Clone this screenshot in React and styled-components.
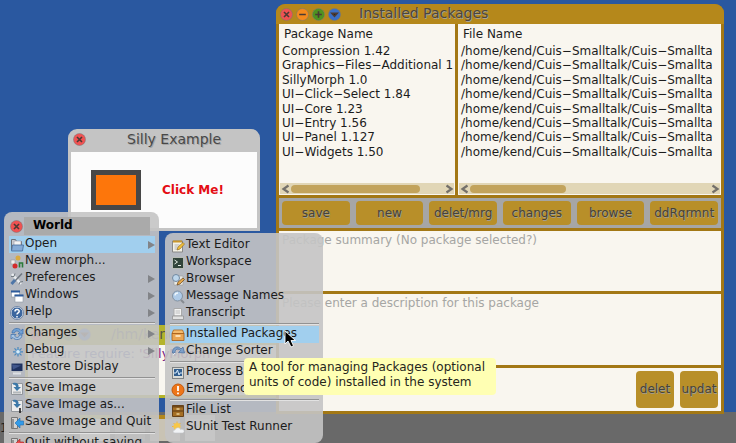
import React from "react";
import styled, { createGlobalStyle, css } from "styled-components";

const GlobalStyle = createGlobalStyle`
  *, *::before, *::after { box-sizing: border-box; }
  html, body { margin: 0; height: 100%; }
  body, button, textarea { font-family: "DejaVu Sans", sans-serif; font-size: 12px; }
  button { border: 0; padding: 0; background: none; color: inherit; cursor: default; }
  h1, h2, p, ul { margin: 0; padding: 0; font-weight: normal; list-style: none; }
`;

const Desktop = styled.main`
  position: relative;
  display: flex;
  flex-direction: column;
  justify-content: flex-end;
  min-height: 443px;
  height: 100vh;
  overflow: hidden;
  background: #2a58a0;
  color: #1c1c1c;
`;

const Taskbar = styled.footer`
  display: flex;
  align-items: center;
  gap: 5px;
  height: 31px;
  background: #696969;
  color: #1c1c1c;
`;

const TaskPreview = styled.div`
  width: 30px;
  height: 26px;
  border-top: 4px solid ${(p) => p.$bar};
  background: ${(p) => p.$fill};
`;

const TaskCount = styled.span`
  width: 75px;
`;

const Window = styled.section`
  position: absolute;
  display: flex;
  flex-direction: column;
  overflow: hidden;
  border-radius: 9px 9px 0 0;
`;

const FeatureWindow = styled(Window)`
  left: 25px;
  top: 325px;
  width: 254px;
  height: 73px;
  padding: 0 3px 3px;
  background: #b4b42c;
  border-radius: 0;
`;

const FeatureTitle = styled.header`
  display: flex;
  align-items: center;
  gap: 3px;
  height: 20px;
  padding: 0 0 2px 2px;
`;

const FeatureName = styled.h2`
  padding-left: 17px;
  font-size: 14px;
  line-height: 18px;
  color: #55554a;
`;

const FeatureCode = styled.p`
  flex: 1;
  padding: 0 3px;
  background: #f9f7f0;
  color: #5a68c0;
  font-size: 13px;
  line-height: 18px;
  white-space: nowrap;
`;

const CodeString = styled.span`
  color: #7a2080;
`;

const PackagesWindow = styled(Window)`
  left: 276px;
  right: 12px;
  top: 4px;
  height: 410px;
  background: #a37815;
  padding: 0 3px 3px;
`;

const TitleBar = styled.header`
  display: flex;
  align-items: center;
  gap: 3px;
  height: 20px;
  margin: 0 -3px;
  padding-left: 4px;
  background: #b5881b;
`;

const TitleText = styled.h1`
  padding: 0 0 2px 15px;
  font-size: 14px;
  line-height: 18px;
  color: #4a463e;
  text-shadow: 1px 1px 0 #a5a195;
  white-space: nowrap;
`;

const RoundButton = styled.button`
  display: flex;
  width: 13px;
  height: 13px;
  flex: none;
  svg { width: 13px; height: 13px; }
`;

const Panes = styled.div`
  display: grid;
  grid-template-columns: 176px minmax(0, 1fr);
  gap: 3px;
  height: 171px;
`;

const Pane = styled.section`
  display: flex;
  flex-direction: column;
  overflow: hidden;
  min-width: 0;
  padding: 1px;
  background: #f9f6ef;
`;

const PaneHeader = styled.h2`
  padding-left: 4px;
  font-size: 12px;
  line-height: 18px;
`;

const List = styled.ul`
  display: grid;
  grid-auto-rows: 1fr;
  height: 116px;
  padding: 1px 0 0 2px;
  overflow: hidden;
  line-height: 14px;
`;

const ListItem = styled.li`
  white-space: nowrap;
`;

const ScrollTrack = styled.div`
  display: flex;
  align-items: center;
  justify-content: space-between;
  height: 11px;
  margin-top: auto;
  background: #e1d6b6;
`;

const ScrollArrow = styled.button`
  display: flex;
  width: 11px;
  height: 11px;
  flex: none;
  svg { width: 11px; height: 11px; }
`;

const ScrollRail = styled.div`
  flex: 1;
`;

const ScrollThumb = styled.div`
  width: ${(p) => p.$size};
  height: 8px;
  border-radius: 4px;
  background: #c2a35c;
`;

const Toolbar = styled.div`
  display: grid;
  grid-template-columns: repeat(6, minmax(0, 1fr));
  gap: 6px;
  height: 30px;
  margin: 3px 0;
  padding: 3px;
  background: #a6a6a6;
`;

const GoldButton = styled.button`
  overflow: hidden;
  border-radius: 4px;
  padding-bottom: 1px;
  background: #b88f29;
  color: #45433a;
  text-shadow: 1px 1px 0 #a39d8c;
  white-space: nowrap;
`;

const Note = styled.textarea`
  display: block;
  width: 100%;
  height: ${(p) => p.$height};
  margin: 0 0 3px;
  padding: 1px 3px;
  border: 0;
  outline: 0;
  resize: none;
  background: #f9f6ef;
  line-height: 16px;
  &::placeholder { color: #a6a6a4; opacity: 1; }
`;

const ActionBar = styled.div`
  display: flex;
  flex: 1;
  justify-content: flex-end;
  gap: 6px;
  padding: 3px;
  background: #f9f6ef;
`;

const SquareButton = styled(GoldButton)`
  width: 38px;
`;

const SillyWindow = styled(Window)`
  left: 68px;
  top: 129px;
  width: 192px;
  height: 102px;
  padding: 0 3px 3px;
  background: #c4c4c4;
`;

const SillyTitle = styled.header`
  display: flex;
  align-items: center;
  height: 23px;
  padding: 0 2px 3px;
`;

const SillyName = styled.h1`
  padding-left: 41px;
  font-size: 14px;
  line-height: 18px;
  color: #484848;
  text-shadow: 1px 1px 0 #a4a4a4;
`;

const SillyBody = styled.div`
  display: flex;
  align-items: center;
  flex: 1;
  gap: 21px;
  padding-left: 20px;
  background: #fcfcfc;
`;

const Swatch = styled.div`
  width: 50px;
  height: 40px;
  border: 5px solid #474747;
  background: #fd760b;
`;

const ClickMe = styled.button`
  color: #e40d14;
  font-weight: bold;
`;

const Menu = styled.div`
  position: absolute;
  display: flex;
  flex-direction: column;
  border-radius: 8px;
  background: rgba(196, 196, 196, 0.9);
`;

const WorldMenu = styled(Menu)`
  left: 4px;
  top: 212px;
  width: 155px;
  padding: 5px 4px 5px 5px;
`;

const SubMenu = styled(Menu)`
  left: 165px;
  top: 233px;
  width: 158px;
  padding: 4px 4px 7px 5px;
`;

const MenuTitle = styled.header`
  display: flex;
  align-items: center;
  gap: 1px;
  height: 19px;
  padding: 0 5px 1px 1px;
`;

const MenuName = styled.h1`
  flex: 1;
  padding: 0 0 2px 9px;
  background: #aaaaaa;
  color: #000;
  font-size: 12px;
  font-weight: bold;
  line-height: 16px;
`;

const MenuItem = styled.button`
  display: flex;
  align-items: center;
  gap: 1px;
  height: 17px;
  padding-left: 1px;
  text-align: left;
  line-height: 15px;
  white-space: nowrap;
  ${(p) => p.$active && css`background: #a1cfee;`}
  > svg { width: 14px; height: 14px; flex: none; }
  > span { flex: 1; min-width: 0; padding-bottom: 2px; }
`;

const Arrow = styled.i`
  width: 0;
  border: 4px solid transparent;
  border-left: 7px solid #828488;
  border-right: 0;
`;

const Separator = styled.hr`
  width: 100%;
  height: 2px;
  margin: 1px 0;
  border: 0;
  border-top: 1px solid #929292;
  background: #e2e2e2;
`;

const Tooltip = styled.div`
  position: absolute;
  left: 244px;
  top: 358px;
  padding: 2px 11px 5px 5px;
  border-radius: 4px;
  background: #ffffb3;
  color: #26261c;
  line-height: 15px;
  white-space: nowrap;
`;

const Pointer = styled.svg`
  position: absolute;
  left: 284px;
  top: 330px;
  width: 12px;
  height: 18px;
`;

const marks = {
  close: ["#f05252", <path key="m" d="M4 4l5 5M9 4l-5 5" />],
  shrink: ["#f58a1c", <path key="m" d="M3.2 6.5h6.6" />],
  grow: ["#4f9320", <path key="m" d="M3.2 6.5h6.6M6.5 3.2v6.6" />],
  menu: ["#3a6fc6", <path key="m" d="M3.8 5.3h5.4l-2.7 3z" fill="#222" />],
};

function Control({ kind, label }) {
  const [fill, mark] = marks[kind];
  return (
    <RoundButton aria-label={label}>
      <svg viewBox="0 0 13 13" fill="none" stroke="#4a3a34" strokeWidth="1.6">
        <circle cx="6.5" cy="6.5" r="6" fill={fill} stroke="#777" strokeOpacity=".5" strokeWidth="1" />
        {mark}
      </svg>
    </RoundButton>
  );
}

const WindowControls = ({ name }) => (
  <>
    <Control kind="close" label={`Close ${name}`} />
    <Control kind="shrink" label={`Collapse ${name}`} />
    <Control kind="grow" label={`Expand ${name}`} />
    <Control kind="menu" label={`${name} menu`} />
  </>
);

const icons = {
  open: <><path d="M1.5 12V1.500h4l1 2h5V7" fill="#c9cbd0" stroke="#6b7178" /><path d="M4 3h7v5H4z" fill="#f4f4f4" stroke="#99a" strokeWidth=".6" /><path d="M2.500 7h11l-1 6h-11z" fill="#86abd6" stroke="#41699c" strokeWidth=".8" /></>,
  morph: <><circle cx="8" cy="3" r="2.500" fill="#d8aa42" /><rect x="1" y="5" width="4" height="4" fill="#eee" stroke="#999" strokeWidth=".6" /><circle cx="5" cy="11" r="2.500" fill="#d42a2a" /><path d="M9.500 12.500V8h3v4.500" fill="none" stroke="#2b7a39" strokeWidth="1.600" /></>,
  prefs: <><path d="M2 2l9 10" stroke="#e9ecef" strokeWidth="2.500" /><path d="M12 1.500L5 9" stroke="#6e7680" strokeWidth="1.500" /><path d="M5 8l-3.500 4" stroke="#4e76a8" strokeWidth="3" /><path d="M1 4.500h3l1-3M9 12.500l1-2.500 3-.5" stroke="#747c84" fill="none" /></>,
  windows: <><rect x="1.500" y="2" width="8" height="6" fill="#fff" stroke="#8e98a6" strokeWidth=".6" /><path d="M1 2.500h9" stroke="#2f5c9c" strokeWidth="2" /><rect x="5" y="6" width="8" height="7" fill="#fff" stroke="#8e98a6" strokeWidth=".6" /><path d="M4.500 6.500h9" stroke="#2f5c9c" strokeWidth="2" /></>,
  help: <><circle cx="7" cy="7" r="6" fill="#3b669f" stroke="#e1e5ec" /><circle cx="7" cy="7" r="6.500" fill="none" stroke="#4d6d98" strokeWidth=".7" /><path d="M5 5.400C5 3 9.200 3 9.200 5.300 9.200 7 7 6.700 7 8.600M7 10v1.500" fill="none" stroke="#fff" strokeWidth="1.500" /></>,
  changes: <><path d="M2 6c0-5 7-6 9-2.500L13 2v5H8l1.500-1.500C7 3 5 4 4.500 6z" fill="#72a1d4" stroke="#366ba9" strokeWidth=".7" /><path d="M12 8c0 5-7 6-9 2.500L1 12V7.500h5L4.500 9C7 11.500 9 10.500 9.500 8z" fill="#a7c5e5" stroke="#366ba9" strokeWidth=".7" /></>,
  debug: <><path d="M8 3v9.500M3 7.800h10M4.500 4.300l7 7M11.500 4.300l-7 7" stroke="#4b88bd" strokeWidth="1.200" /><circle cx="8" cy="7.800" r="2.300" fill="#d9ecf8" stroke="#5c98ca" /></>,
  display: <><rect x="1" y="2" width="12" height="8.500" fill="#1f3260" stroke="#b8bdc4" /><path d="M2 3.500l9 1-8 4z" fill="#41578c" /><path d="M3 12.500h8" stroke="#dde0e4" strokeWidth="2" /></>,
  save: <><path d="M1.500 1.500h11v11h-11z" fill="#ececec" stroke="#92979c" /><path d="M3 9.500h8v2H3z" fill="#b3b7ba" /><path d="M3 1c4-1 6 1 5.500 4H11L7 9 3.500 5H6C6 3.500 5 2.500 3 2.500z" fill="#3c78a8" /></>,
  saveAs: <><path d="M1.500 1.500h11v11h-11z" fill="#ececec" stroke="#92979c" /><path d="M3 1c4-1 6 1 5.500 4H11L7 9 3.500 5H6C6 3.500 5 2.500 3 2.500z" fill="#3c78a8" /><path d="M10 9v5" stroke="#111" strokeWidth="1.500" /></>,
  saveQuit: <><path d="M1.500 1.500h6v11h-6z" fill="#d3d3d3" stroke="#777" /><path d="M3 3v9" stroke="#555" /><path d="M5 7l5-5v3h3.500v4H10v3z" fill="#329be8" stroke="#1e6bb1" strokeWidth=".6" /></>,
  quit: <><path d="M1.500 1.500h6v11h-6z" fill="#d3d3d3" stroke="#777" /><path d="M3 3v9" stroke="#555" /><path d="M5 7l5-5v3h3.500v4H10v3z" fill="#e64a4a" stroke="#a42222" strokeWidth=".6" /></>,
  editor: <><path d="M1.500 2h10v11h-10z" fill="#f3f1e6" stroke="#888" /><path d="M2 2.500h9" stroke="#c9962b" strokeWidth="2" /><path d="M3.500 6h5M3.500 8h4M3.500 10h5" stroke="#a5a5a5" strokeWidth=".8" /><path d="M6 11l1-3 5-4.500 1.500 1.500L9 10z" fill="#f0bf3b" stroke="#8e6417" strokeWidth=".6" /></>,
  terminal: <><rect x="1.500" y="1.500" width="11" height="11" fill="#31443a" stroke="#b8bdb6" /><path d="M3.500 4l3 2-3 2M7 9.500h3" fill="none" stroke="#e4ece4" /></>,
  browser: <><path d="M3 3h9v9H3z" fill="#e9e9e4" stroke="#9c9c9c" strokeWidth=".6" /><circle cx="5" cy="5" r="3.500" fill="#bdd6ec" stroke="#7288a0" /><path d="M6 12l1-3 5-4 1.500 1.500L9 11z" fill="#e4a84c" stroke="#69451c" strokeWidth=".7" /></>,
  search: <><circle cx="6.500" cy="6" r="5" fill="#afcbe8" stroke="#8292a3" /><path d="M4 5.500c0-2 1.500-2.500 3-2.500" fill="none" stroke="#eef6fc" strokeWidth="1.300" /><path d="M10 10l3 3" stroke="#868b91" strokeWidth="2" /></>,
  transcript: <><path d="M3 1.500h7.500V9H3z" fill="#f2f2f2" stroke="#aaa" /><path d="M4.500 4h4.500M4.500 6h4.500" stroke="#aaa" strokeWidth=".7" /><path d="M1.500 9h11v3.500h-11z" fill="#e2e2e2" stroke="#939393" strokeWidth=".8" /></>,
  packages: <><path d="M2.500 2h9l1.500 3.500H1z" fill="#f3bb6d" stroke="#af6419" strokeWidth=".8" /><path d="M1 5.500h12v7H1z" fill="#e9a552" stroke="#a55a16" strokeWidth=".8" /><path d="M4.500 8h5" stroke="#fff3d9" strokeWidth="1.500" /></>,
  sorter: <><path d="M1.500 8C1 2 7 0 10 4l2-2 1.500 6-6-.5 2-2C7 3 4 4 4 8z" fill="#7d9fc8" stroke="#476f9f" strokeWidth=".7" /><path d="M2 10l2-2" stroke="#dce8f5" /></>,
  process: <><rect x="1.500" y="1.500" width="11" height="11" fill="#d9dbd7" stroke="#7e8284" /><path d="M3 3h8v7H3z" fill="#315d8d" /><path d="M3 7h2l1.500-3 1.500 5 1-2h2" fill="none" stroke="#d5ecff" /></>,
  emergency: <><circle cx="7" cy="7" r="6" fill="#ee7619" stroke="#c75909" /><path d="M7 3v5M7 9.500v1.800" stroke="#fff" strokeWidth="1.800" /></>,
  files: <><path d="M1.500 1.500h11v11h-11z" fill="#a56f25" stroke="#67421a" /><path d="M2 7h10M2 2.800h10" stroke="#583816" /><path d="M5.500 5h3M5.500 10h3" stroke="#ead29b" strokeWidth="1.300" /></>,
  sunit: <><circle cx="6" cy="5.500" r="3.500" fill="#f8c747" /><path d="M6 .5v1.500M1 5.500h1.500M2.500 2l1 1M9.500 2l-1 1" stroke="#f2b53a" /><path d="M4 12c-2.500 0-2.500-3 0-3 .5-3 5-3 5.500-.5C14 7.500 14 12 11.500 12z" fill="#f1f3f5" stroke="#c2c6ca" strokeWidth=".6" /></>,
};

function Item({ icon, label, active, more }) {
  return (
    <MenuItem role="menuitem" $active={active} aria-haspopup={more ? "menu" : undefined}>
      <svg viewBox="0 0 14 14" aria-hidden="true">{icons[icon]}</svg>
      <span>{label}</span>
      {more && <Arrow />}
    </MenuItem>
  );
}

function Scrollbar({ size }) {
  return (
    <ScrollTrack>
      <ScrollArrow aria-label="Scroll left">
        <svg viewBox="0 0 11 11" fill="none" stroke="#74706a" strokeWidth="2.2"><path d="M8.500 2.500L3.500 6l5 3.500" /></svg>
      </ScrollArrow>
      <ScrollRail><ScrollThumb $size={size} /></ScrollRail>
      <ScrollArrow aria-label="Scroll right">
        <svg viewBox="0 0 11 11" fill="none" stroke="#74706a" strokeWidth="2.2"><path d="M3.500 2.500l5 3.500-5 3.500" /></svg>
      </ScrollArrow>
    </ScrollTrack>
  );
}

const packages = [
  "Compression 1.42",
  "Graphics−Files−Additional 1.2",
  "SillyMorph 1.0",
  "UI−Click−Select 1.84",
  "UI−Core 1.23",
  "UI−Entry 1.56",
  "UI−Panel 1.127",
  "UI−Widgets 1.50",
];

const worldItems = [
  { icon: "open", label: "Open", active: true, more: true },
  { icon: "morph", label: "New morph..." },
  { icon: "prefs", label: "Preferences", more: true },
  { icon: "windows", label: "Windows", more: true },
  { icon: "help", label: "Help", more: true },
  null,
  { icon: "changes", label: "Changes", more: true },
  { icon: "debug", label: "Debug", more: true },
  { icon: "display", label: "Restore Display" },
  null,
  { icon: "save", label: "Save Image" },
  { icon: "saveAs", label: "Save Image as..." },
  { icon: "saveQuit", label: "Save Image and Quit" },
  null,
  { icon: "quit", label: "Quit without saving" },
];

const openItems = [
  { icon: "editor", label: "Text Editor" },
  { icon: "terminal", label: "Workspace" },
  { icon: "browser", label: "Browser" },
  { icon: "search", label: "Message Names" },
  { icon: "transcript", label: "Transcript" },
  null,
  { icon: "packages", label: "Installed Packages", active: true },
  { icon: "sorter", label: "Change Sorter" },
  null,
  { icon: "process", label: "Process Browser" },
  { icon: "emergency", label: "Emergency" },
  null,
  { icon: "files", label: "File List" },
  { icon: "sunit", label: "SUnit Test Runner" },
];

const renderItems = (items) =>
  items.map((item, i) => (item ? <Item key={item.label} {...item} /> : <Separator key={i} />));

export default function App() {
  return (
    <>
      <GlobalStyle />
      <Desktop>
        <Taskbar>
          <TaskCount>1</TaskCount>
          <TaskPreview $bar="#b4b42c" $fill="#f0eee6" />
          <TaskPreview $bar="#8f8f8f" $fill="#8c8c8c" />
          <TaskPreview $bar="#b5881b" $fill="#c9c3b4" />
          <TaskPreview $bar="#c4c4c4" $fill="#d8d8d8" />
        </Taskbar>

        <FeatureWindow>
          <FeatureTitle>
            <WindowControls name="Feature" />
            <FeatureName>/hm/kend</FeatureName>
          </FeatureTitle>
          <FeatureCode>Feature require: <CodeString>'SillyMorph'</CodeString></FeatureCode>
        </FeatureWindow>

        <PackagesWindow>
          <TitleBar>
            <WindowControls name="Installed Packages" />
            <TitleText>Installed Packages</TitleText>
          </TitleBar>
          <Panes>
            <Pane>
              <PaneHeader>Package Name</PaneHeader>
              <List>{packages.map((name) => <ListItem key={name}>{name}</ListItem>)}</List>
              <Scrollbar size="85%" />
            </Pane>
            <Pane>
              <PaneHeader>File Name</PaneHeader>
              <List>
                {packages.map((name) => (
                  <ListItem key={name}>/home/kend/Cuis−Smalltalk/Cuis−Smallta</ListItem>
                ))}
              </List>
              <Scrollbar size="40%" />
            </Pane>
          </Panes>
          <Toolbar>
            {["save", "new", "delet/mrg", "changes", "browse", "ddRqrmnt"].map((name) => (
              <GoldButton key={name}>{name}</GoldButton>
            ))}
          </Toolbar>
          <Note $height="60px" aria-label="Package summary" placeholder="Package summary (No package selected?)" />
          <Note $height="71px" aria-label="Description" placeholder="Please enter a description for this package" />
          <ActionBar>
            <SquareButton>delet</SquareButton>
            <SquareButton>updat</SquareButton>
          </ActionBar>
        </PackagesWindow>

        <SillyWindow>
          <SillyTitle>
            <Control kind="close" label="Close Silly Example" />
            <SillyName>Silly Example</SillyName>
          </SillyTitle>
          <SillyBody>
            <Swatch />
            <ClickMe>Click Me!</ClickMe>
          </SillyBody>
        </SillyWindow>

        <WorldMenu role="menu" aria-label="World">
          <MenuTitle>
            <Control kind="close" label="Close menu" />
            <MenuName>World</MenuName>
          </MenuTitle>
          {renderItems(worldItems)}
        </WorldMenu>

        <SubMenu role="menu" aria-label="Open">{renderItems(openItems)}</SubMenu>

        <Tooltip role="tooltip">
          A tool for managing Packages (optional<br />units of code) installed in the system
        </Tooltip>
        <Pointer viewBox="0 0 12 18" aria-hidden="true">
          <path d="M1 1v13l3-3 3 6 2.500-1.200L7 10.500h4.500z" fill="#000" stroke="#fff" strokeWidth=".9" />
        </Pointer>
      </Desktop>
    </>
  );
}
